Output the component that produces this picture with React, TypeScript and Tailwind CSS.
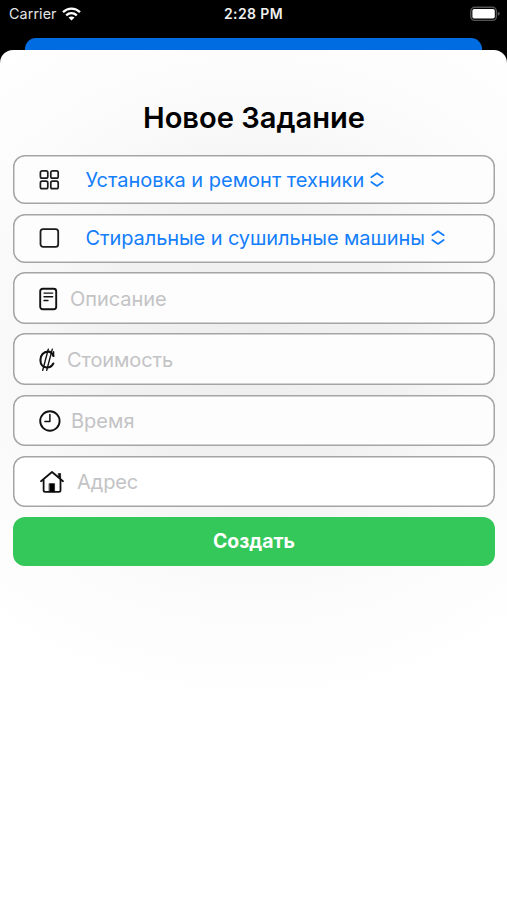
import React from 'react';

const GridIcon = () => (
  <svg width="22" height="22" viewBox="0 0 22 22" fill="none" stroke="#1c1c1e" strokeWidth="1.7">
    <rect x="1.4" y="1.8" width="7.4" height="7.4" rx="1.7" />
    <rect x="11.8" y="1.8" width="7.4" height="7.4" rx="1.7" />
    <rect x="1.4" y="12.2" width="7.4" height="7.4" rx="1.7" />
    <rect x="11.8" y="12.2" width="7.4" height="7.4" rx="1.7" />
  </svg>
);

const SquareIcon = () => (
  <svg width="22" height="22" viewBox="0 0 22 22" fill="none" stroke="#1c1c1e" strokeWidth="1.8">
    <rect x="1.5" y="2.2" width="17.7" height="17.7" rx="2.6" />
  </svg>
);

const NoteIcon = () => (
  <svg width="20" height="24" viewBox="0 0 20 24" fill="none" stroke="#111" strokeLinecap="round">
    <rect x="1.2" y="1.7" width="16" height="20.6" rx="2.5" strokeWidth="1.9" />
    <path d="M5 6.1H13.7M5 9.8H13.7M5 13.5H9" strokeWidth="1.4" />
  </svg>
);

const ColonIcon = () => (
  <svg width="18" height="26" viewBox="0 0 18 26" fill="none" stroke="#111" strokeLinecap="round">
    <path d="M14.3 9C13.4 6 11.6 4.6 9 4.6C4.6 4.6 1.4 8.2 1.4 13C1.4 17.8 4.2 20.5 8.2 20.5C11 20.5 13.1 18.9 14.3 16.5" strokeWidth="2.1" />
    <path d="M14.6 4.8V9.4" strokeWidth="1.4" />
    <path d="M9.3 2.1L3.7 23.4M13.3 2.1L7.7 23.4" strokeWidth="1.4" />
  </svg>
);

const ClockIcon = () => (
  <svg width="24" height="24" viewBox="0 0 24 24" fill="none" stroke="#111" strokeLinecap="round" strokeLinejoin="round">
    <circle cx="10.9" cy="12" r="9.7" strokeWidth="1.9" />
    <path d="M10.9 5.6V12.4H5.9" strokeWidth="1.5" />
  </svg>
);

const HouseIcon = () => (
  <svg width="26" height="24" viewBox="0 0 26 24" fill="none" stroke="#111" strokeLinecap="round" strokeLinejoin="round">
    <path d="M2 11.2L13 2L24 11.2" strokeWidth="1.8" />
    <path d="M4.6 10V20.2Q4.6 21.8 6.2 21.8H19.9Q21.5 21.8 21.5 20.2V10" strokeWidth="1.8" />
    <path d="M19.6 3.6H21.6V8.8L19.6 7Z" fill="#111" strokeWidth="0.8" />
    <path d="M10.4 13.6H15.6V21.7H10.4Z" fill="#000" strokeWidth="0.6" />
  </svg>
);

const Chevrons = () => (
  <svg width="14" height="16" viewBox="0 0 14 16" fill="none" stroke="#147efb" strokeWidth="1.7" strokeLinecap="round" strokeLinejoin="round">
    <path d="M1.3 5.2L7 1.2L12.7 5.2M1.3 10L7 14L12.7 10" />
  </svg>
);

function StatusBar() {
  return (
    <div className="flex h-[38px] items-start justify-between pl-[9px] pr-[7px] pt-[3.5px] text-white">
      <div className="flex h-5 flex-1 items-center gap-[5px]">
        <span className="text-[14.3px] tracking-[0.1px] text-[#e4e4e4]">Carrier</span>
        <svg width="19" height="14" viewBox="0 0 19 14" fill="none" stroke="#fff" strokeWidth="2.3">
          <path d="M1 5.2C5.9 0.5 13.1 0.5 18 5.2" />
          <path d="M4.2 8.4C7.3 5.5 11.7 5.5 14.8 8.4" />
          <path d="M9.5 13.5L6.5 10.6C8.2 9 10.8 9 12.5 10.6Z" fill="#fff" stroke="none" />
        </svg>
      </div>
      <span className="mr-[2px] flex h-5 items-center text-[14px] font-semibold tracking-[0.4px] text-[#f0f0f0]">2:28 PM</span>
      <div className="flex h-[20px] flex-1 items-center justify-end">
        <svg width="31" height="16" viewBox="0 0 31 16">
          <rect x="1.8" y="1.2" width="25.6" height="13.2" rx="4" fill="none" stroke="#555" strokeWidth="1.4" />
          <rect x="3.4" y="3" width="22.4" height="9.6" rx="1.8" fill="#fff" />
          <path d="M28.8 5.8Q30.8 6.4 30.8 7.8Q30.8 9.2 28.8 9.8Z" fill="#555" />
        </svg>
      </div>
    </div>
  );
}

function Picker({ icon, label }: { icon: React.ReactNode; label: React.ReactNode }) {
  return (
    <div className="flex h-[49px] items-center rounded-[12px] bg-[#fdfdfd] pl-[26px] pt-[0.6px] shadow-[inset_0_0_0_1.5px_#a5a5a5]">
      <span className="w-[46.5px] shrink-0">{icon}</span>
      <button className="flex items-center gap-[6px] whitespace-nowrap text-[#147efb]">
        {label}
        <Chevrons />
      </button>
    </div>
  );
}

function Field({ icon, label }: { icon: React.ReactNode; label: React.ReactNode }) {
  return (
    <div className="flex h-[51.7px] items-center rounded-[12px] bg-[#fdfdfd] pl-[26px] pt-[1.4px] text-[#c3c3c5] shadow-[inset_0_0_0_1.5px_#a5a5a5] last:bg-white">
      {icon}
      {label}
    </div>
  );
}

export default function App() {
  return (
    <div className="h-[900px] w-full overflow-hidden bg-black font-[Inter,sans-serif]">
      <StatusBar />
      <div className="mx-[25px] h-3 rounded-t-[11px] bg-[#006ce2]" />
      <main className="flex h-[850px] flex-col rounded-t-[13px] bg-white bg-[radial-gradient(ellipse_420px_370px_at_50%_290px,#eeeeee_0%,#f1f1f1_35%,#f8f8f8_55%,#fbfbfb_68%,#ffffff_100%)] pl-[13px] pr-3 pt-[46px]">
        <h1 className="h-[59px] text-center text-[29.1px] leading-[43px] font-semibold text-black">Новое Задание</h1>
        <div className="flex flex-col gap-[9.7px]">
          <Picker icon={<GridIcon />} label={<span className="text-[20px]">Установка и ремонт техники</span>} />
          <Picker icon={<SquareIcon />} label={<span className="text-[20px] tracking-[-0.1px]">Стиральные и сушильные машины</span>} />
        </div>
        <div className="mt-[9.7px] flex flex-col gap-[9.4px]">
          <Field icon={<NoteIcon />} label={<span className="ml-[11px] text-[20px] tracking-[-0.06px]">Описание</span>} />
          <Field icon={<ColonIcon />} label={<span className="ml-[10px] text-[20px] tracking-[-0.1px]">Стоимость</span>} />
          <Field icon={<ClockIcon />} label={<span className="ml-[8px] text-[20px]">Время</span>} />
          <Field icon={<HouseIcon />} label={<span className="ml-[12px] text-[20px] tracking-[-0.1px]">Адрес</span>} />
        </div>
        <button className="mt-[9.6px] h-[49px] shrink-0 rounded-[12px] bg-[#34c759] pt-px text-[19.4px] font-bold text-white">Создать</button>
      </main>
    </div>
  );
}
